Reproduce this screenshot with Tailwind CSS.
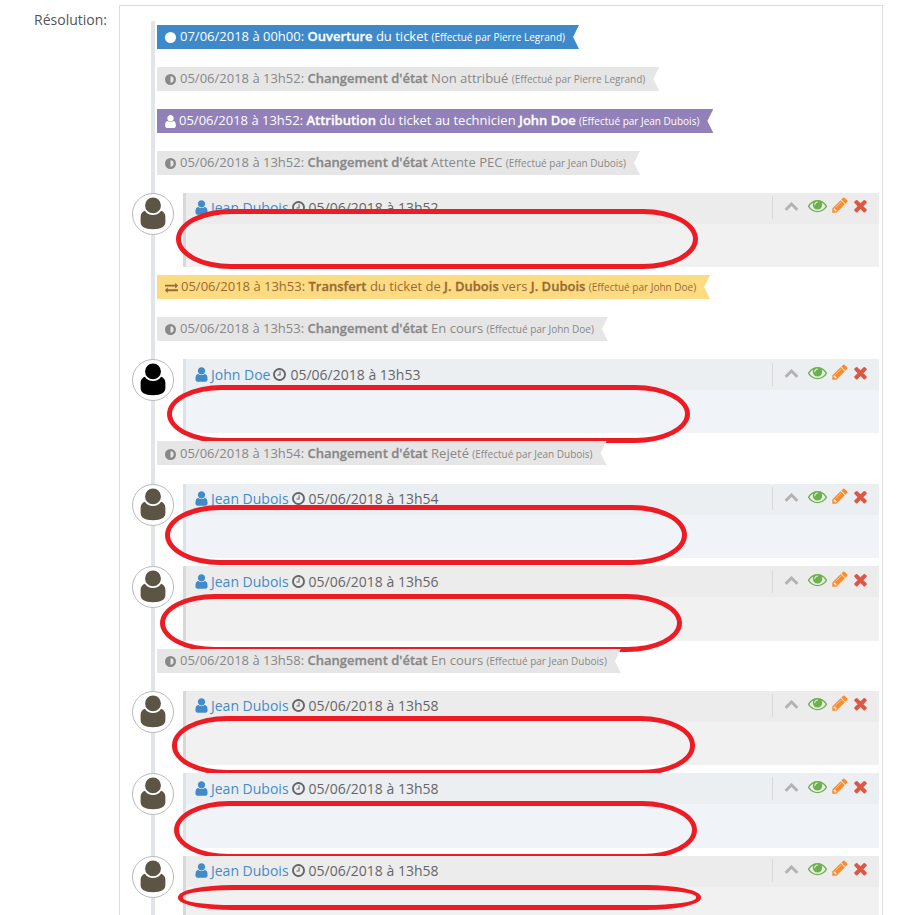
<!DOCTYPE html>
<html lang="fr">
<head>
    <meta charset="UTF-8">
    <title>Résolution</title>
    <script src="https://cdn.jsdelivr.net/npm/@tailwindcss/browser@4"></script>
</head>
<body class="bg-white h-[915px] overflow-hidden font-['Open_Sans',sans-serif] text-[14px] text-[#555]">
    <!-- icons -->
    <svg class="hidden">
        <symbol id="i-user" viewBox="0 0 1792 1792"><path d="M1536 1399q0 109-62.5 187t-150.5 78h-854q-88 0-150.5-78t-62.5-187q0-85 8.5-160.5t31.5-152 58.5-131 94-89 134.5-34.5q131 128 313 128t313-128q76 0 134.5 34.5t94 89 58.5 131 31.5 152 8.5 160.5zm-256-887q0 159-112.5 271.5t-271.5 112.5-271.5-112.5-112.5-271.5 112.5-271.5 271.5-112.5 271.5 112.5 112.5 271.5z"/></symbol>
        <symbol id="i-clock" viewBox="0 0 1792 1792"><path d="M1024 544v448q0 14-9 23t-23 9h-320q-14 0-23-9t-9-23v-64q0-14 9-23t23-9h224v-352q0-14 9-23t23-9h64q14 0 23 9t9 23zm416 352q0-148-73-273t-198-198-273-73-273 73-198 198-73 273 73 273 198 198 273 73 273-73 198-198 73-273zm224 0q0 209-103 385.5t-279.5 279.5-385.5 103-385.5-103-279.5-279.5-103-385.5 103-385.5 279.5-279.5 385.5-103 385.5 103 279.5 279.5 103 385.5z"/></symbol>
        <symbol id="i-adjust" viewBox="1 1 14 14"><path fill-rule="evenodd" d="M8 1a7 7 0 1 1 0 14A7 7 0 0 1 8 1zm0 3v8a4 4 0 0 0 0-8z"/></symbol>
        <symbol id="i-exchange" viewBox="0 0 1792 1792"><path d="M1792 1184v192q0 13-9.5 22.5t-22.5 9.5h-1376v192q0 13-9.5 22.5t-22.5 9.5q-12 0-24-10l-319-320q-9-9-9-22 0-14 9-23l320-320q9-9 23-9 13 0 22.5 9.5t9.5 22.5v192h1376q13 0 22.5 9.5t9.5 22.5zm0-544q0 14-9 23l-320 320q-9 9-23 9-13 0-22.5-9.5t-9.5-22.5v-192h-1376q-13 0-22.5-9.5t-9.5-22.5v-192q0-13 9.5-22.5t22.5-9.5h1376v-192q0-14 9-23t23-9q12 0 24 10l319 319q9 9 9 23z"/></symbol>
        <symbol id="i-up" viewBox="0 0 1792 1792"><path d="M1683 1331l-166 165q-19 19-45 19t-45-19l-531-531-531 531q-19 19-45 19t-45-19l-166-165q-19-19-19-45.5t19-45.5l742-741q19-19 45-19t45 19l742 741q19 19 19 45.5t-19 45.5z"/></symbol>
        <symbol id="i-eye" viewBox="0 0 1792 1792"><path d="M1664 960q-152-236-381-353 61 104 61 225 0 185-131.5 316.5t-316.5 131.5-316.5-131.5-131.5-316.5q0-121 61-225-229 117-381 353 133 205 333.5 326.5t434.5 121.5 434.5-121.5 333.5-326.5zm-720-384q0-20-14-34t-34-14q-125 0-214.5 89.5t-89.5 214.5q0 20 14 34t34 14 34-14 14-34q0-86 61-147t147-61q20 0 34-14t14-34zm848 384q0 34-20 69-140 230-376.5 368.5t-499.5 138.5-499.5-139-376.5-368q-20-35-20-69t20-69q140-229 376.5-368t499.5-139 499.5 139 376.5 368q20 35 20 69z"/></symbol>
        <symbol id="i-pencil" viewBox="0 0 1792 1792"><path d="M491 1536l91-91-235-235-91 91v107h128v128h107zm523-928q0-22-22-22-10 0-17 7l-542 542q-7 7-7 17 0 22 22 22 10 0 17-7l542-542q7-7 7-17zm-54-192l416 416-832 832h-416v-416zm683 96q0 53-37 90l-166 166-416-416 166-165q36-38 90-38 53 0 91 38l235 234q37 39 37 91z"/></symbol>
        <symbol id="i-times" viewBox="0 0 1792 1792"><path d="M1490 1322q0 40-28 68l-136 136q-28 28-68 28t-68-28l-294-294-294 294q-28 28-68 28t-68-28l-136-136q-28-28-28-68t28-68l294-294-294-294q-28-28-28-68t28-68l136-136q28-28 68-28t68 28l294 294 294-294q28-28 68-28t68 28l136 136q28 28 28 68t-28 68l-294 294 294 294q28 28 28 68z"/></symbol>
        <symbol id="i-avatar" viewBox="0 0 42 42"><circle cx="21" cy="12" r="8.300"/><path d="M12.500 17.500c2 3 5 4.600 8.500 4.600s6.500-1.600 8.500-4.600c2.500 1 4.500 2.800 4.500 6.500v5.500c0 4.500-4 7.500-13 7.500s-13-3-13-7.500V24c0-3.700 2-5.500 4.500-6.500z"/></symbol>
    </svg>

    <div class="flex pt-[5px] pl-[2px]">
        <div class="w-[105px] text-right pt-[5px] leading-[19px] text-[#555]">Résolution:</div>
        <div class="ml-[12px] w-[764px] h-[1100px] border border-[#ddd] pl-[31px] pt-[15px]">
            <div class="border-l-4 border-[#e1e4e9] pl-[2px] pt-[4px] w-[728px] h-[1080px]">

                <div class="w-fit h-[24px] mb-[18px] pl-[8px] pr-[14px] flex items-center bg-[#3e89ca] text-white text-[13px] whitespace-nowrap [clip-path:polygon(0_0,100%_0,calc(100%-6px)_50%,100%_100%,0_100%)]">
                    <span class="w-[11px] h-[11px] rounded-full bg-white mr-[4px]"></span>
                    <span>07/06/2018 à 00h00: <b class="font-semibold [-webkit-text-stroke:0.3px]">Ouverture</b> du ticket <small class="text-[10px]">(Effectué par Pierre Legrand)</small></span>
                </div>
                <div class="w-fit h-[24px] mb-[18px] pl-[8px] pr-[14px] flex items-center bg-[#e6e6e6] text-[#888] text-[13px] whitespace-nowrap [clip-path:polygon(0_0,100%_0,calc(100%-6px)_50%,100%_100%,0_100%)]">
                    <svg class="w-[11px] h-[11px] mr-[4px] fill-current"><use href="#i-adjust"/></svg>
                    <span>05/06/2018 à 13h52: <b class="font-semibold [-webkit-text-stroke:0.3px]">Changement d'état</b> Non attribué <small class="text-[10px]">(Effectué par Pierre Legrand)</small></span>
                </div>
                <div class="w-fit h-[24px] mb-[18px] pl-[6px] pr-[14px] flex items-center bg-[#9280b8] text-white text-[13px] whitespace-nowrap [clip-path:polygon(0_0,100%_0,calc(100%-6px)_50%,100%_100%,0_100%)]">
                    <svg class="w-[15px] h-[15px] mr-[1px] fill-current"><use href="#i-user"/></svg>
                    <span>05/06/2018 à 13h52: <b class="font-semibold [-webkit-text-stroke:0.3px]">Attribution</b> du ticket au technicien <b class="font-semibold [-webkit-text-stroke:0.3px]">John Doe</b> <small class="text-[10px]">(Effectué par Jean Dubois)</small></span>
                </div>
                <div class="w-fit h-[24px] mb-[18px] pl-[8px] pr-[14px] flex items-center bg-[#e6e6e6] text-[#888] text-[13px] whitespace-nowrap [clip-path:polygon(0_0,100%_0,calc(100%-6px)_50%,100%_100%,0_100%)]">
                    <svg class="w-[11px] h-[11px] mr-[4px] fill-current"><use href="#i-adjust"/></svg>
                    <span>05/06/2018 à 13h52: <b class="font-semibold [-webkit-text-stroke:0.3px]">Changement d'état</b> Attente PEC <small class="text-[10px]">(Effectué par Jean Dubois)</small></span>
                </div>

                <!-- comment 1 -->
                <div class="relative flex -ml-[25px] mb-[8px] h-[74px]">
                    <div class="w-[42px] h-[42px] rounded-full border border-[#bbb] bg-white text-[#5c5546] shrink-0"><svg class="w-[40px] h-[40px] fill-current"><use href="#i-avatar"/></svg></div>
                    <div class="ml-[9px] w-[696px] border-l-[3px] border-[#d8d8d8] bg-[#f1f1f1]">
                        <div class="h-[31px] pb-[2px] bg-[#ececec] flex items-center pl-[7px]">
                            <svg class="w-[17px] h-[17px] fill-[#428bca]"><use href="#i-user"/></svg>
                            <a class="text-[#428bca] ml-[1px] pb-[1px]">Jean Dubois</a>
                            <svg class="w-[15px] h-[15px] ml-[2px] fill-[#666]"><use href="#i-clock"/></svg>
                            <span class="ml-[3px] text-[#666] pb-[1px]">05/06/2018 à 13h52</span>
                            <div class="ml-auto w-[107px] h-[23px] border-l border-[#d8d8d8] flex items-center pl-[11px] pb-[5px]">
                                <svg class="w-[15px] h-[15px] fill-[#b3b3b3]"><use href="#i-up"/></svg>
                                <svg class="w-[19px] h-[19px] ml-[9px] fill-[#6cb14a]"><use href="#i-eye"/></svg>
                                <svg class="w-[18px] h-[18px] ml-[4px] fill-[#fb8c2c]"><use href="#i-pencil"/></svg>
                                <svg class="w-[19px] h-[19px] ml-[2px] fill-[#dd5744]"><use href="#i-times"/></svg>
                            </div>
                        </div>
                    </div>
                    <div class="absolute left-[44px] top-[16px] w-[522px] h-[60px] border-[5px] border-[#ed1c24] rounded-[55px/30px]"></div>
                </div>

                <div class="w-fit h-[24px] mb-[18px] pl-[8px] pr-[14px] flex items-center bg-[#fddb82] text-[#9a6a36] text-[13px] whitespace-nowrap [clip-path:polygon(0_0,100%_0,calc(100%-6px)_50%,100%_100%,0_100%)]">
                    <svg class="w-[13px] h-[13px] mr-[3px] fill-current"><use href="#i-exchange"/></svg>
                    <span>05/06/2018 à 13h53: <b class="font-semibold [-webkit-text-stroke:0.3px]">Transfert</b> du ticket de <b class="font-semibold [-webkit-text-stroke:0.3px]">J. Dubois</b> vers <b class="font-semibold [-webkit-text-stroke:0.3px]">J. Dubois</b> <small class="text-[10px]">(Effectué par John Doe)</small></span>
                </div>
                <div class="w-fit h-[24px] mb-[18px] pl-[8px] pr-[14px] flex items-center bg-[#e6e6e6] text-[#888] text-[13px] whitespace-nowrap [clip-path:polygon(0_0,100%_0,calc(100%-6px)_50%,100%_100%,0_100%)]">
                    <svg class="w-[11px] h-[11px] mr-[4px] fill-current"><use href="#i-adjust"/></svg>
                    <span>05/06/2018 à 13h53: <b class="font-semibold [-webkit-text-stroke:0.3px]">Changement d'état</b> En cours <small class="text-[10px]">(Effectué par John Doe)</small></span>
                </div>

                <!-- comment 2 -->
                <div class="relative flex -ml-[25px] mb-[8px] h-[74px]">
                    <div class="w-[42px] h-[42px] rounded-full border border-[#bbb] bg-white text-black shrink-0"><svg class="w-[40px] h-[40px] fill-current"><use href="#i-avatar"/></svg></div>
                    <div class="ml-[9px] w-[696px] border-l-[3px] border-[#d9e3e8] bg-[#f0f4f8]">
                        <div class="h-[31px] bg-[#ebeff2] flex items-center pl-[7px]">
                            <svg class="w-[17px] h-[17px] fill-[#428bca]"><use href="#i-user"/></svg>
                            <a class="text-[#428bca] ml-[1px] pb-[1px]">John Doe</a>
                            <svg class="w-[15px] h-[15px] ml-[2px] fill-[#666]"><use href="#i-clock"/></svg>
                            <span class="ml-[3px] text-[#666] pb-[1px]">05/06/2018 à 13h53</span>
                            <div class="ml-auto w-[107px] h-[23px] border-l border-[#d8d8d8] flex items-center pl-[11px] pb-[5px]">
                                <svg class="w-[15px] h-[15px] fill-[#b3b3b3]"><use href="#i-up"/></svg>
                                <svg class="w-[19px] h-[19px] ml-[9px] fill-[#6cb14a]"><use href="#i-eye"/></svg>
                                <svg class="w-[18px] h-[18px] ml-[4px] fill-[#fb8c2c]"><use href="#i-pencil"/></svg>
                                <svg class="w-[19px] h-[19px] ml-[2px] fill-[#dd5744]"><use href="#i-times"/></svg>
                            </div>
                        </div>
                    </div>
                    <div class="absolute left-[35px] top-[26px] w-[523px] h-[58px] border-[5px] border-[#ed1c24] rounded-[55px/29px]"></div>
                </div>

                <div class="w-fit h-[24px] mb-[19px] pl-[8px] pr-[14px] pt-[2px] flex items-center bg-[#e6e6e6] text-[#888] text-[13px] whitespace-nowrap [clip-path:polygon(0_0,100%_0,calc(100%-6px)_50%,100%_100%,0_100%)]">
                    <svg class="w-[11px] h-[11px] mr-[4px] fill-current"><use href="#i-adjust"/></svg>
                    <span>05/06/2018 à 13h54: <b class="font-semibold [-webkit-text-stroke:0.3px]">Changement d'état</b> Rejeté <small class="text-[10px]">(Effectué par Jean Dubois)</small></span>
                </div>

                <!-- comment 3 -->
                <div class="relative flex -ml-[25px] mb-[8px] h-[74px]">
                    <div class="w-[42px] h-[42px] rounded-full border border-[#bbb] bg-white text-[#5c5546] shrink-0"><svg class="w-[40px] h-[40px] fill-current"><use href="#i-avatar"/></svg></div>
                    <div class="ml-[9px] w-[696px] border-l-[3px] border-[#d9e3e8] bg-[#f0f4f8]">
                        <div class="h-[31px] pb-[2px] bg-[#ebeff2] flex items-center pl-[7px]">
                            <svg class="w-[17px] h-[17px] fill-[#428bca]"><use href="#i-user"/></svg>
                            <a class="text-[#428bca] ml-[1px] pb-[1px]">Jean Dubois</a>
                            <svg class="w-[15px] h-[15px] ml-[2px] fill-[#666]"><use href="#i-clock"/></svg>
                            <span class="ml-[3px] text-[#666] pb-[1px]">05/06/2018 à 13h54</span>
                            <div class="ml-auto w-[107px] h-[23px] border-l border-[#d8d8d8] flex items-center pl-[11px] pb-[5px]">
                                <svg class="w-[15px] h-[15px] fill-[#b3b3b3]"><use href="#i-up"/></svg>
                                <svg class="w-[19px] h-[19px] ml-[9px] fill-[#6cb14a]"><use href="#i-eye"/></svg>
                                <svg class="w-[18px] h-[18px] ml-[4px] fill-[#fb8c2c]"><use href="#i-pencil"/></svg>
                                <svg class="w-[19px] h-[19px] ml-[2px] fill-[#dd5744]"><use href="#i-times"/></svg>
                            </div>
                        </div>
                    </div>
                    <div class="absolute left-[33px] top-[21px] w-[522px] h-[60px] border-[5px] border-[#ed1c24] rounded-[55px/30px]"></div>
                </div>

                <!-- comment 4 -->
                <div class="relative flex -ml-[25px] mb-[8px] h-[75px]">
                    <div class="w-[42px] h-[42px] rounded-full border border-[#bbb] bg-white text-[#5c5546] shrink-0"><svg class="w-[40px] h-[40px] fill-current"><use href="#i-avatar"/></svg></div>
                    <div class="ml-[9px] w-[696px] border-l-[3px] border-[#d8d8d8] bg-[#f1f1f1]">
                        <div class="h-[31px] bg-[#ececec] flex items-center pl-[7px]">
                            <svg class="w-[17px] h-[17px] fill-[#428bca]"><use href="#i-user"/></svg>
                            <a class="text-[#428bca] ml-[1px] pb-[1px]">Jean Dubois</a>
                            <svg class="w-[15px] h-[15px] ml-[2px] fill-[#666]"><use href="#i-clock"/></svg>
                            <span class="ml-[3px] text-[#666] pb-[1px]">05/06/2018 à 13h56</span>
                            <div class="ml-auto w-[107px] h-[23px] border-l border-[#d8d8d8] flex items-center pl-[11px] pb-[5px]">
                                <svg class="w-[15px] h-[15px] fill-[#b3b3b3]"><use href="#i-up"/></svg>
                                <svg class="w-[19px] h-[19px] ml-[9px] fill-[#6cb14a]"><use href="#i-eye"/></svg>
                                <svg class="w-[18px] h-[18px] ml-[4px] fill-[#fb8c2c]"><use href="#i-pencil"/></svg>
                                <svg class="w-[19px] h-[19px] ml-[2px] fill-[#dd5744]"><use href="#i-times"/></svg>
                            </div>
                        </div>
                    </div>
                    <div class="absolute left-[28px] top-[28px] w-[522px] h-[58px] border-[5px] border-[#ed1c24] rounded-[55px/29px]"></div>
                </div>

                <div class="w-fit h-[24px] mb-[18px] pl-[8px] pr-[14px] flex items-center bg-[#e6e6e6] text-[#888] text-[13px] whitespace-nowrap [clip-path:polygon(0_0,100%_0,calc(100%-6px)_50%,100%_100%,0_100%)]">
                    <svg class="w-[11px] h-[11px] mr-[4px] fill-current"><use href="#i-adjust"/></svg>
                    <span>05/06/2018 à 13h58: <b class="font-semibold [-webkit-text-stroke:0.3px]">Changement d'état</b> En cours <small class="text-[10px]">(Effectué par Jean Dubois)</small></span>
                </div>

                <!-- comment 5 -->
                <div class="relative flex -ml-[25px] mb-[8px] h-[74px]">
                    <div class="w-[42px] h-[42px] rounded-full border border-[#bbb] bg-white text-[#5c5546] shrink-0"><svg class="w-[40px] h-[40px] fill-current"><use href="#i-avatar"/></svg></div>
                    <div class="ml-[9px] w-[696px] border-l-[3px] border-[#d8d8d8] bg-[#f1f1f1]">
                        <div class="h-[31px] pb-[2px] bg-[#ececec] flex items-center pl-[7px]">
                            <svg class="w-[17px] h-[17px] fill-[#428bca]"><use href="#i-user"/></svg>
                            <a class="text-[#428bca] ml-[1px] pb-[1px]">Jean Dubois</a>
                            <svg class="w-[15px] h-[15px] ml-[2px] fill-[#666]"><use href="#i-clock"/></svg>
                            <span class="ml-[3px] text-[#666] pb-[1px]">05/06/2018 à 13h58</span>
                            <div class="ml-auto w-[107px] h-[23px] border-l border-[#d8d8d8] flex items-center pl-[11px] pb-[5px]">
                                <svg class="w-[15px] h-[15px] fill-[#b3b3b3]"><use href="#i-up"/></svg>
                                <svg class="w-[19px] h-[19px] ml-[9px] fill-[#6cb14a]"><use href="#i-eye"/></svg>
                                <svg class="w-[18px] h-[18px] ml-[4px] fill-[#fb8c2c]"><use href="#i-pencil"/></svg>
                                <svg class="w-[19px] h-[19px] ml-[2px] fill-[#dd5744]"><use href="#i-times"/></svg>
                            </div>
                        </div>
                    </div>
                    <div class="absolute left-[40px] top-[25px] w-[523px] h-[59px] border-[5px] border-[#ed1c24] rounded-[55px/29px]"></div>
                </div>

                <!-- comment 6 -->
                <div class="relative flex -ml-[25px] mb-[8px] h-[75px]">
                    <div class="w-[42px] h-[42px] rounded-full border border-[#bbb] bg-white text-[#5c5546] shrink-0"><svg class="w-[40px] h-[40px] fill-current"><use href="#i-avatar"/></svg></div>
                    <div class="ml-[9px] w-[696px] border-l-[3px] border-[#d9e3e8] bg-[#f0f4f8]">
                        <div class="h-[31px] bg-[#ebeff2] flex items-center pl-[7px]">
                            <svg class="w-[17px] h-[17px] fill-[#428bca]"><use href="#i-user"/></svg>
                            <a class="text-[#428bca] ml-[1px] pb-[1px]">Jean Dubois</a>
                            <svg class="w-[15px] h-[15px] ml-[2px] fill-[#666]"><use href="#i-clock"/></svg>
                            <span class="ml-[3px] text-[#666] pb-[1px]">05/06/2018 à 13h58</span>
                            <div class="ml-auto w-[107px] h-[23px] border-l border-[#d8d8d8] flex items-center pl-[11px] pb-[5px]">
                                <svg class="w-[15px] h-[15px] fill-[#b3b3b3]"><use href="#i-up"/></svg>
                                <svg class="w-[19px] h-[19px] ml-[9px] fill-[#6cb14a]"><use href="#i-eye"/></svg>
                                <svg class="w-[18px] h-[18px] ml-[4px] fill-[#fb8c2c]"><use href="#i-pencil"/></svg>
                                <svg class="w-[19px] h-[19px] ml-[2px] fill-[#dd5744]"><use href="#i-times"/></svg>
                            </div>
                        </div>
                    </div>
                    <div class="absolute left-[42px] top-[28px] w-[523px] h-[58px] border-[5px] border-[#ed1c24] rounded-[55px/29px]"></div>
                </div>

                <!-- comment 7 -->
                <div class="relative flex -ml-[25px] mb-[8px] h-[74px]">
                    <div class="w-[42px] h-[42px] rounded-full border border-[#bbb] bg-white text-[#5c5546] shrink-0"><svg class="w-[40px] h-[40px] fill-current"><use href="#i-avatar"/></svg></div>
                    <div class="ml-[9px] w-[696px] border-l-[3px] border-[#d8d8d8] bg-[#f1f1f1]">
                        <div class="h-[31px] pb-[2px] bg-[#ececec] flex items-center pl-[7px]">
                            <svg class="w-[17px] h-[17px] fill-[#428bca]"><use href="#i-user"/></svg>
                            <a class="text-[#428bca] ml-[1px] pb-[1px]">Jean Dubois</a>
                            <svg class="w-[15px] h-[15px] ml-[2px] fill-[#666]"><use href="#i-clock"/></svg>
                            <span class="ml-[3px] text-[#666] pb-[1px]">05/06/2018 à 13h58</span>
                            <div class="ml-auto w-[107px] h-[23px] border-l border-[#d8d8d8] flex items-center pl-[11px] pb-[5px]">
                                <svg class="w-[15px] h-[15px] fill-[#b3b3b3]"><use href="#i-up"/></svg>
                                <svg class="w-[19px] h-[19px] ml-[9px] fill-[#6cb14a]"><use href="#i-eye"/></svg>
                                <svg class="w-[18px] h-[18px] ml-[4px] fill-[#fb8c2c]"><use href="#i-pencil"/></svg>
                                <svg class="w-[19px] h-[19px] ml-[2px] fill-[#dd5744]"><use href="#i-times"/></svg>
                            </div>
                        </div>
                    </div>
                    <div class="absolute left-[46px] top-[29px] w-[523px] h-[25px] border-[5px] border-[#ed1c24] rounded-[55px/12px]"></div>
                </div>

            </div>
        </div>
    </div>
</body>
</html>
